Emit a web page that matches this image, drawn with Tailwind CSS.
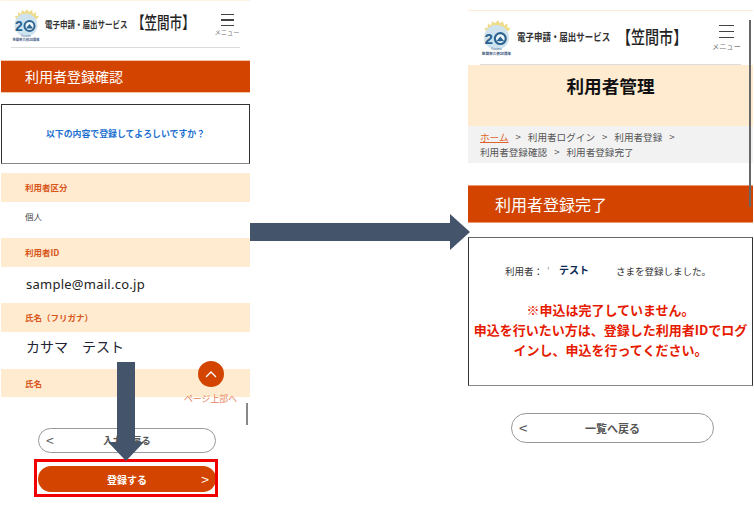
<!DOCTYPE html>
<html lang="ja">
<head>
    <meta charset="UTF-8">
    <meta name="viewport" content="width=device-width, initial-scale=1.0">
    <title>利用者登録</title>
    <script src="https://cdn.jsdelivr.net/npm/@tailwindcss/browser@4"></script>
</head>
<body class="bg-white font-['Noto_Sans_CJK_JP','Noto_Sans',sans-serif] text-[#333]">
    <div class="relative w-[754px] h-[507px] overflow-hidden flex pl-px">

        <!-- left phone: confirm -->
        <div class="relative w-[249px] h-[507px] shrink-0">
            <div class="h-px bg-[#fdf3e3]"></div>
            <div class="mx-[10px] h-[47px] border-b border-[#dcdcdc] flex items-center">
                <svg class="w-[30px] h-[34px] shrink-0 mt-[1px]" viewBox="0 0 30 34">
                    <path d="M5 11 L4 8 L7 8 L7 4 L10 6 L11 2 L14 4 L16 1 L18 4 L21 2 L22 6 L25 4 L25 8 L28 8 L26 11 Z" fill="#efdc8a"/>
                    <circle cx="15" cy="17" r="11.5" fill="#cfe3ee"/>
                    <text x="4" y="23" font-size="14" font-weight="700" fill="#2c6390" font-family="Liberation Sans">2</text>
                    <circle cx="18.5" cy="18" r="5" fill="#eef6fa" stroke="#2c6390" stroke-width="2"/>
                    <path d="M14.8 20.5 L18.5 16 L22.2 20.5 Z" fill="#2c6390"/>
                    <text x="15" y="28.5" text-anchor="middle" font-size="2.6" fill="#5a7a9a" font-family="Liberation Sans">Kasama</text>
                    <text x="15" y="33.4" text-anchor="middle" font-size="3.3" font-weight="700" fill="#33507a" font-family="Noto Sans CJK JP">笠間市合併20周年</text>
                </svg>
                <span class="ml-[4px] w-[82px] shrink-0 text-[9.5px] scale-x-[0.79] origin-left font-bold whitespace-nowrap text-[#333] leading-none mt-[1px]">電子申請・届出サービス</span>
                <span class="ml-[5px] w-[50px] shrink-0 text-[16.5px] scale-x-[0.76] origin-left font-medium whitespace-nowrap text-[#222] leading-none -mt-[4px]">【笠間市】</span>
                <div class="ml-auto w-[26px] flex flex-col items-center mt-[2px]">
                    <div class="w-[13px] flex flex-col gap-[4px]">
                        <div class="h-[1.5px] bg-[#444]"></div>
                        <div class="h-[1.5px] bg-[#444]"></div>
                        <div class="h-[1.5px] bg-[#444]"></div>
                    </div>
                    <span class="mt-[4px] text-[6.3px] leading-none text-[#777] whitespace-nowrap">メニュー</span>
                </div>
            </div>
            <div class="mt-[12px] h-[33px] bg-[#d24400] border-y border-[#f3c6a8] flex items-center pl-[24px] text-white text-[14px]">利用者登録確認</div>
            <div class="mt-[11px] h-[60px] border border-[#333] border-b-[#888] flex items-center justify-center text-[8.9px] font-bold text-[#1b6fd1]">以下の内容で登録してよろしいですか？</div>

            <div class="mt-[9px] h-[29px] bg-[#ffebd0] flex items-center pl-[24px] text-[8.5px] font-bold text-[#d9551a]">利用者区分</div>
            <div class="h-[36px] flex items-center pl-[24px] pb-[8px] text-[8.5px] text-[#444]">個人</div>
            <div class="h-[29px] bg-[#ffebd0] flex items-center pl-[24px] text-[8.5px] font-bold text-[#d9551a]">利用者ID</div>
            <div class="h-[36px] flex items-center pl-[25px] text-[13px] tracking-[0.25px] text-[#222] font-['Noto_Sans',sans-serif]">sample@mail.co.jp</div>
            <div class="h-[29px] bg-[#ffebd0] flex items-center pl-[24px] text-[8.5px] font-bold text-[#d9551a]">氏名（フリガナ）</div>
            <div class="h-[37px] flex items-center pl-[25px] pb-[8px] text-[14px] text-[#223] whitespace-pre">カサマ　テスト</div>
            <div class="h-[28px] bg-[#ffebd0] flex items-center pl-[24px] text-[8.5px] font-bold text-[#d9551a]">氏名</div>

            <div class="mt-[31px] mx-[37px] w-[178px] h-[25px] rounded-full border border-[#999] bg-white relative flex items-center justify-center text-[9.5px] font-bold text-[#555]">
                <span class="absolute left-[7px] text-[14px] font-normal">&lt;</span>入力へ戻る
            </div>
            <div class="mt-[13px] mx-[37px] w-[178px] h-[26px] rounded-full bg-[#d24400] relative flex items-center justify-center text-[10px] font-bold text-white">
                登録する<span class="absolute right-[7px] text-[14px] font-normal">&gt;</span>
            </div>

            <!-- page top button over the list -->
            <div class="absolute left-[197px] top-[361px] w-[26px] h-[26px] rounded-full bg-[#d24400] flex items-center justify-center">
                <svg class="w-[12px] h-[8px]" viewBox="0 0 12 8" fill="none" stroke="#fff" stroke-width="1.3"><path d="M1 7 L6 2 L11 7"/></svg>
            </div>
            <span class="absolute left-[183px] top-[395px] text-[8.9px] leading-none whitespace-nowrap text-[#e8825a]">ページ上部へ</span>
            <div class="absolute left-[245px] top-[403px] w-[2px] h-[22px] bg-[#888]"></div>
        </div>

        <div class="w-[218px] shrink-0"></div>

        <!-- right phone: done -->
        <div class="relative w-[285px] h-[507px] shrink-0 pt-[10px]">
            <div class="h-px bg-[#fdebd3]"></div>
            <div class="mx-[12px] h-[54px] border-b border-[#dcdcdc] flex items-center">
                <svg class="w-[33px] h-[37px] shrink-0" viewBox="0 0 30 34">
                    <path d="M5 11 L4 8 L7 8 L7 4 L10 6 L11 2 L14 4 L16 1 L18 4 L21 2 L22 6 L25 4 L25 8 L28 8 L26 11 Z" fill="#efdc8a"/>
                    <circle cx="15" cy="17" r="11.5" fill="#cfe3ee"/>
                    <text x="4" y="23" font-size="14" font-weight="700" fill="#2c6390" font-family="Liberation Sans">2</text>
                    <circle cx="18.5" cy="18" r="5" fill="#eef6fa" stroke="#2c6390" stroke-width="2"/>
                    <path d="M14.8 20.5 L18.5 16 L22.2 20.5 Z" fill="#2c6390"/>
                    <text x="15" y="28.5" text-anchor="middle" font-size="2.6" fill="#5a7a9a" font-family="Liberation Sans">Kasama</text>
                    <text x="15" y="33.4" text-anchor="middle" font-size="3.3" font-weight="700" fill="#33507a" font-family="Noto Sans CJK JP">笠間市合併20周年</text>
                </svg>
                <span class="ml-[4px] w-[94px] shrink-0 text-[10.6px] scale-x-[0.8] origin-left font-bold whitespace-nowrap text-[#333] leading-none">電子申請・届出サービス</span>
                <span class="ml-[6px] w-[56px] shrink-0 text-[18px] scale-x-[0.78] origin-left font-medium whitespace-nowrap text-[#222] leading-none -mt-[3px]">【笠間市】</span>
                <div class="ml-auto w-[29px] flex flex-col items-center">
                    <div class="w-[15px] flex flex-col gap-[4.5px]">
                        <div class="h-[1.5px] bg-[#444]"></div>
                        <div class="h-[1.5px] bg-[#444]"></div>
                        <div class="h-[1.5px] bg-[#444]"></div>
                    </div>
                    <span class="mt-[5px] text-[7.2px] leading-none text-[#777] whitespace-nowrap">メニュー</span>
                </div>
            </div>
            <div class="h-[61px] bg-[#ffebd0] flex justify-center pt-[9px] text-[17.6px] leading-[24px] font-bold text-[#111]">利用者管理</div>
            <div class="h-[37px] bg-[#f2f2f2] pl-[12px] pt-[4px] text-[9.6px] leading-[15px] text-[#555]">
                <div><span class="text-[#e0622a] underline">ホーム</span><span class="mx-[7px]">&gt;</span>利用者ログイン<span class="mx-[7px]">&gt;</span>利用者登録<span class="mx-[7px]">&gt;</span></div>
                <div>利用者登録確認<span class="mx-[7px]">&gt;</span>利用者登録完了</div>
            </div>
            <div class="mt-[22px] h-[38px] bg-[#d24400] border-y border-[#ee9a6a] flex items-center pl-[27px] text-white text-[16px]">利用者登録完了</div>
            <div class="mt-[14px] h-[149px] border border-[#333] border-t-[#666] border-b-[#888] flex flex-col items-center pt-[25px]">
                <div class="flex items-center pr-[5px] text-[9.5px] leading-[16px] whitespace-nowrap text-[#333]">
                    <span>利用者：</span><span class="ml-[4px] w-[12px] text-[#999]">'</span><span class="text-[10px] font-bold text-[#0a2a55] -mt-[2px]">テスト</span><span class="ml-[27px]">さまを登録しました。</span>
                </div>
                <div class="mt-[21px] text-[13px] leading-[20px] font-bold text-[#e61a00] text-center w-[283px]">※申込は完了していません。<br>申込を行いたい方は、登録した利用者IDでログ<br>インし、申込を行ってください。</div>
            </div>
            <div class="mt-[27px] ml-[43px] w-[203px] h-[30px] rounded-full border border-[#999] relative flex items-center justify-center text-[11px] font-bold text-[#555]">
                <span class="absolute left-[7px] text-[15px] font-normal">&lt;</span>一覧へ戻る
            </div>
            <div class="absolute left-[281px] top-[20px] w-[2px] h-[187px] bg-[#666]"></div>
        </div>

        <!-- callouts drawn over the screens -->
        <div class="absolute left-[34px] top-[459px] w-[184px] h-[38px] border-[3px] border-[#f00000]"></div>
        <svg class="absolute left-[106px] top-[361px] w-[40px] h-[101px]" viewBox="0 0 40 101">
            <path d="M11 1 H29 V81 H38 L20 100 L2 81 H11 Z" fill="#44546a"/>
        </svg>
        <svg class="absolute left-[250px] top-[213px] w-[221px] h-[38px]" viewBox="0 0 221 38">
            <path d="M0 10 H200 V1 L220 19 L200 37 V28 H0 Z" fill="#44546a"/>
        </svg>
    </div>
</body>
</html>
